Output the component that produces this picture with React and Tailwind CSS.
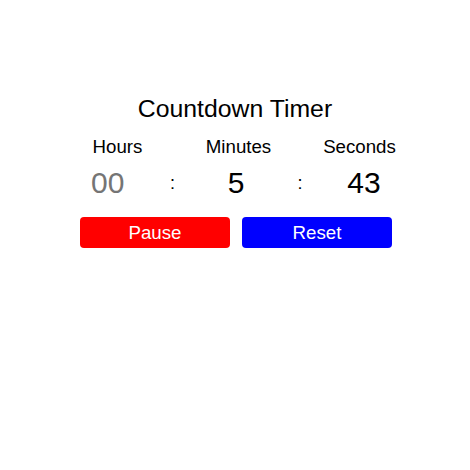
export default function App() {
  return (
    <div
      className="w-[470px] h-[470px] bg-white flex flex-col items-center pt-[93px] text-black"
      style={{ fontFamily: '"Liberation Sans", Arial, sans-serif' }}
    >
      <h1 className="text-[24.8px] leading-[32px] font-normal">Countdown Timer</h1>
      <div className="w-[312px] ml-[2px] mt-[8px]">
        <div className="grid w-[326px] grid-cols-[75px_35px_97px_26px_93px]">
          <div className="text-[18.7px] leading-[28px] text-center">Hours</div>
          <div></div>
          <div className="text-[18.7px] leading-[28px] text-center">Minutes</div>
          <div></div>
          <div className="text-[18.7px] leading-[28px] text-center">Seconds</div>

          <div className="mt-[4px] text-[30px] leading-[36px] pl-[11px] text-[#757575]">00</div>
          <div className="mt-[4px] flex items-center justify-center text-[18px] leading-[28px]">:</div>
          <div className="mt-[4px] text-[30px] leading-[36px] text-center pr-[5px]">5</div>
          <div className="mt-[4px] flex items-center justify-center text-[18px] leading-[28px]">:</div>
          <div className="mt-[4px] text-[30px] leading-[36px] text-center pl-[9px]">43</div>
        </div>
        <div className="mt-[16px] flex gap-[12px]">
          <button className="w-[150px] h-[31px] rounded-[4px] bg-[#ff0000] text-white text-[18.7px] leading-[28px] flex items-center justify-center">
            Pause
          </button>
          <button className="w-[150px] h-[31px] rounded-[4px] bg-[#0000ff] text-white text-[18.7px] leading-[28px] flex items-center justify-center">
            Reset
          </button>
        </div>
      </div>
    </div>
  );
}
